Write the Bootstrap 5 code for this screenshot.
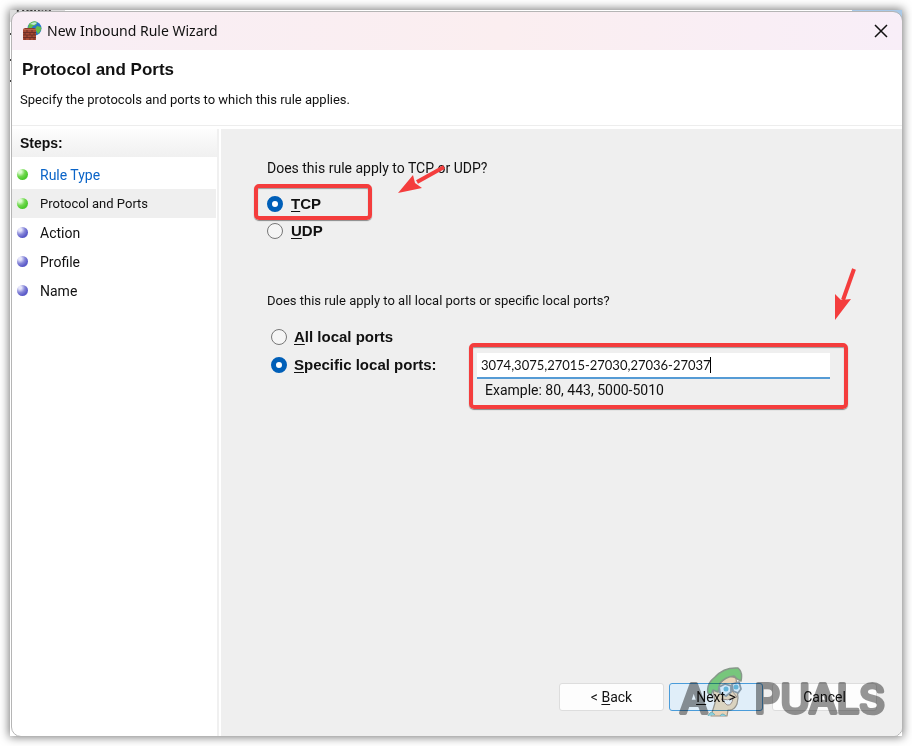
<!DOCTYPE html>
<html lang="en">
<head>
<meta charset="utf-8">
<meta name="viewport" content="width=device-width, initial-scale=1">
<title>New Inbound Rule Wizard</title>
<link href="https://cdn.jsdelivr.net/npm/bootstrap@5.3.0/dist/css/bootstrap.min.css" rel="stylesheet">
<style>
body{background:#fff;color:#111;font:13px/20px Roboto,"Liberation Sans",sans-serif;padding:10px}
.desktop{min-height:calc(100vh - 20px);padding:2px 0 0 2px;background:#fff;box-shadow:0 0 9px 1px #777}
.behind{left:0;top:0;right:0;height:12px;color:#333;
  background:linear-gradient(90deg,#ddd 55px,#fff 55px calc(100% - 50px),#a9c9e8 calc(100% - 50px))}
.behind span{display:block;font:bold 13px/12px "Liberation Sans",sans-serif;margin:-8px 0 0 6px}
.edge{left:0;width:2px;height:2px;background:#444}
.wizard{background:#fff;border-radius:9px;outline:1px solid #b5b5b5;overflow:hidden}
.titlebar{height:38px;background:linear-gradient(90deg,#f8eef5,#fbeef0 55%,#f8eef8);font:14px/20px "Noto Sans",sans-serif;padding:0 13px 0 10px;gap:5px}
.closer{width:16px;height:16px}
.heading{height:75px;padding:10px 8px 0}
.heading h1{font:bold 17px/20px "Liberation Sans",sans-serif;margin:0 2px 10px}
.body-area{border-top:1px solid #ededed;padding-top:3px}
.steps{width:207px;border-right:2px solid #f0f0f0;flex:none}
.steps h2{font:bold 14px/29px "Liberation Sans",sans-serif;height:28px;padding-left:8px;margin:0 0 3px;background:linear-gradient(#fdfdfd,#f0f0f0)}
.step{height:29px;padding-left:5px;gap:12px;color:#111;text-decoration:none;margin-right:1px;font-size:14px}
.step.current{background:#efefef;font-size:13px}
.step.done{color:#0a64c8}
.ball{width:11px;height:11px;border-radius:50%;background:radial-gradient(circle at 28% 25%,#e6e6fb 0 12%,#8585d8 42%,#5959c8 70%,#8c8cd8)}
.ball.green{background:radial-gradient(circle at 28% 25%,#ddfbd2 0 12%,#70d84e 42%,#4ac92c 70%,#82dc68)}
.content{background:#efefef;margin-left:2px;padding-top:29px}
.question{line-height:20px;margin:0 0 0 46px;padding:0}
#q1{font-size:14px}
.choice{gap:8px;font:bold 15px/20px "Liberation Sans",sans-serif}
.choice input{appearance:none;width:16px;height:16px;margin:0;flex:none;border:1px solid #777;border-radius:50%;background:#f5f5f5}
.choice input:checked{border:5px solid #005fb8;background:#fff}
.choice u,.footer u{text-underline-offset:2px;text-decoration-thickness:1px}
.marked{border:4px solid #f43d3d;border-radius:5px;box-shadow:0 1px 1px #888,inset 0 1px 1px #999}
.marked-tcp{width:118px;height:36px;margin:6px 0 0 33px;padding:4px 0 0 9px}
.udp{margin:1px 0 0 46px}
.second{margin-top:50px}
.ports{margin:12px 54px 0 50px}
.port-radios{width:198px;flex:none}
.port-radios .choice{height:28px;gap:7px}
.port-box{margin-top:20px;height:66px;padding:6px 14px 0 4px}
.port-box input{font:13px/20px Lato,"Liberation Sans",sans-serif;height:26px;padding:0 4px;border:0;border-bottom:2px solid #559bd5;background:#fff;color:#111;outline:0}
.caret{left:233px;top:4px;width:1px;height:16px;background:#000}
.example{padding-left:8px;margin:1px 0 0;font-size:14px}
.footer{padding:0 25px 25px 0;gap:5px;font-size:14px}
.footer button{width:105px;height:28px;border:1px solid #ddd;border-radius:3px;background:#fdfdfd;color:#111;padding:0}
.footer button.next{width:94px;border-color:#4a9cda;background:#e0eef9}
.arrow-a{left:175px;top:34px}
.arrow-b{right:43px;top:138px}
.brand{right:14px;bottom:17px;opacity:.6;pointer-events:none;mix-blend-mode:multiply}
.brand text{font:400 40px Inter,sans-serif;fill:#505050;stroke:#505050;stroke-width:4px;stroke-linejoin:round}
</style>
<script src="https://cdn.jsdelivr.net/npm/bootstrap@5.3.0/dist/js/bootstrap.bundle.min.js"></script>
</head>
<body>
<div class="desktop position-relative d-flex">
  <div class="behind position-absolute overflow-hidden" aria-hidden="true"><span>Rules</span></div>
  <i class="edge position-absolute" style="top:23px"></i><i class="edge position-absolute" style="top:49px"></i><i class="edge position-absolute" style="top:70px"></i>
  <section class="wizard position-relative flex-grow-1 d-flex flex-column">
    <header class="titlebar d-flex align-items-center">
      <svg width="20" height="20" viewBox="0 0 20 20" aria-hidden="true">
        <circle cx="12.500" cy="7.500" r="7" fill="#2876cc"/><path d="M7 3Q11-1 15 1L14 4 11 5 9 8 6 7ZM15 5l4 1q1 4-3 7l-3-5Z" fill="#62be4b"/><path d="M8 3q4-3 7-1l-3 2Z" fill="#d8f3ff" opacity=".8"/>
        <path d="M1 8l2-1h9l2 1v10l-1 1H1Z" fill="#8d3a2a"/><path d="M1 9h13v10H1Z" fill="#a84b36"/><path d="M1 11.500h13M1 14h13M1 16.500h13M5 9v2.500M10 9v2.500M3 11.500V14M8 11.500V14M12 11.500V14M5 14v2.500M10 14v2.500M3 16.500V19M8 16.500V19M12 16.500V19" stroke="#642b25" stroke-width=".8"/><path d="M1 8.500h13" stroke="#b9664b"/>
      </svg>
      <span>New Inbound Rule Wizard</span>
      <button class="closer btn p-0 border-0 ms-auto d-flex" aria-label="Close"><svg width="16" height="16" viewBox="0 0 16 16"><path d="M2 2l12 12M14 2L2 14" stroke="#111" stroke-width="1.500" fill="none"/></svg></button>
    </header>
    <div class="heading"><h1>Protocol and Ports</h1><p class="m-0">Specify the protocols and ports to which this rule applies.</p></div>
    <div class="body-area d-flex flex-grow-1">
      <nav class="steps"><h2>Steps:</h2>
        <a href="#" class="step done d-flex align-items-center"><i class="ball green"></i>Rule Type</a>
        <a href="#" class="step current d-flex align-items-center" aria-current="step"><i class="ball green"></i>Protocol and Ports</a>
        <a href="#" class="step d-flex align-items-center"><i class="ball"></i>Action</a>
        <a href="#" class="step d-flex align-items-center"><i class="ball"></i>Profile</a>
        <a href="#" class="step d-flex align-items-center"><i class="ball"></i>Name</a>
      </nav>
      <main class="content position-relative flex-grow-1 d-flex flex-column">
        <div role="radiogroup" aria-labelledby="q1">
          <p class="question" id="q1">Does this rule apply to TCP or UDP?</p>
          <div class="marked marked-tcp d-flex align-items-center"><label class="choice d-flex align-items-center"><input type="radio" name="protocol" checked><span><u>T</u>CP</span></label></div>
          <label class="choice udp d-flex align-items-center"><input type="radio" name="protocol"><span><u>U</u>DP</span></label>
        </div>
        <div class="second" role="radiogroup" aria-labelledby="q2">
          <p class="question" id="q2">Does this rule apply to all local ports or specific local ports?</p>
          <div class="ports d-flex">
            <div class="port-radios">
              <label class="choice d-flex align-items-center"><input type="radio" name="ports"><span><u>A</u>ll local ports</span></label>
              <label class="choice d-flex align-items-center"><input type="radio" name="ports" checked><span><u>S</u>pecific local ports:</span></label>
            </div>
            <div class="marked port-box flex-grow-1">
              <div class="position-relative"><input class="w-100 d-block" type="text" aria-label="Specific local ports" value="3074,3075,27015-27030,27036-27037"><i class="caret position-absolute"></i></div>
              <p class="example">Example: 80, 443, 5000-5010</p>
            </div>
          </div>
        </div>
        <svg class="arrow-a position-absolute" width="50" height="32" viewBox="0 0 50 32" aria-hidden="true"><path d="M48 4L21 19" stroke="#f43d3d" stroke-width="4"/><path d="M2 30L17 12l2 8 7 5Z" fill="#f43d3d"/></svg>
        <svg class="arrow-b position-absolute" width="26" height="54" viewBox="0 0 26 54" aria-hidden="true"><path d="M21 2L10 33" stroke="#f43d3d" stroke-width="4"/><path d="M2 53V27l6 6 10-1Z" fill="#f43d3d"/></svg>
        <div class="footer d-flex justify-content-end mt-auto"><button type="button">&lt; <u>B</u>ack</button><button type="button" class="next"><u>N</u>ext &gt;</button><button type="button" class="ms-1">Cancel</button></div>
        <svg class="brand position-absolute" width="210" height="54" viewBox="0 0 210 54" role="img" aria-label="Appuals">
          <text x="2" y="48">A</text><text x="207" y="48" text-anchor="end">PUALS</text>
          <g transform="translate(29 1)" stroke-linejoin="round">
            <path d="M6 23l2 14-4 13h16l1-6q6 1 9-6l1-6-2-20-8-2Z" fill="#f5cf9e" stroke="#6d5b43" stroke-width="1.200"/><path d="M1 27Q-1 18 8 11 17 1 31 2q5 4 3 13-5-2-7-5-9 1-14 7l-2 9-5-2-2 5Z" fill="#29b832" stroke="#45634a" stroke-width="1.500"/><path d="M12 21l6-3 6 2v6l-5 4-6-3ZM25 18l7-2 2 7-3 4-5-2Z" fill="#e4f5ff" stroke="#526775" stroke-width="1.800"/><circle cx="19" cy="23" r="2.500" fill="#1497c8"/><circle cx="29" cy="21" r="2.500" fill="#1497c8"/><path d="M25 25l5 6-5 1" fill="#f5cf9e" stroke="#7c5847"/><path d="M14 33q7 2 12-1-1 8-6 7Z" fill="#fff" stroke="#7c5847"/><path d="M1 50q3-7 7-1M13 50q2-4 6 0" fill="#4cc7df" stroke="#248d9c"/></g>
        </svg>
      </main>
    </div>
  </section>
</div>
</body>
</html>
